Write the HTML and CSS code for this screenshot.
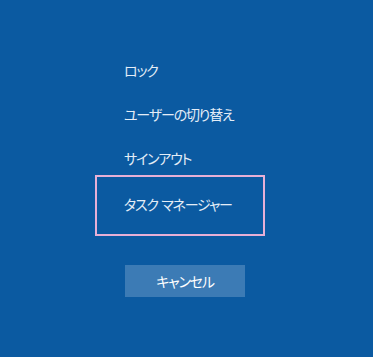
FILE: index.html
```html
<!DOCTYPE html>
<html lang="ja">
<head>
<meta charset="utf-8">
<link rel="stylesheet" href="styles.css">
</head>
<body>
<div class="screen">
  <ul class="menu">
    <li class="item">ロック</li>
    <li class="item">ユーザーの切り替え</li>
    <li class="item">サインアウト</li>
    <li class="item focused">タスク マネージャー</li>
  </ul>
  <button class="cancel">キャンセル</button>
</div>
</body>
</html>
```
FILE: styles.css
```css
html, body {
  margin: 0;
  padding: 0;
  background: #0b5aa1;
}
.screen {
  width: 373px;
  height: 357px;
  background: #0b5aa1;
  padding-top: 48px;
  padding-left: 95px;
  box-sizing: border-box;
  font-family: "Noto Sans CJK JP", "Noto Sans", sans-serif;
  font-feature-settings: "palt";
  color: #e4edf7;
}
.menu {
  list-style: none;
  margin: 0;
  padding: 0;
  width: 170px;
}
.item {
  height: 44px;
  display: flex;
  align-items: center;
  padding-left: 29px;
  font-size: 14px;
  letter-spacing: -1.2px;
  word-spacing: 1.5px;
  white-space: pre;
  box-sizing: border-box;
}
.focused {
  margin-top: -5px;
  height: 61px;
  border: 2px solid #e8b0d6;
  padding-left: 27px;
  padding-bottom: 3px;
}
.cancel {
  display: block;
  margin: 29px 0 0 30px;
  width: 120px;
  height: 32px;
  border: none;
  background: #3c7bb5;
  color: #ffffff;
  font-family: "Noto Sans CJK JP", "Noto Sans", sans-serif;
  font-feature-settings: "palt";
  font-size: 14px;
  letter-spacing: -1.2px;
  padding: 0;
}
```
